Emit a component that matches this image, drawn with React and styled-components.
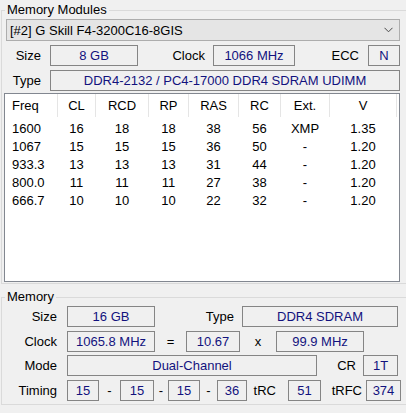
import React from "react";
import styled, { createGlobalStyle } from "styled-components";

const GlobalStyle = createGlobalStyle`
  html, body {
    margin: 0;
    padding: 0;
    background: #f0f0f0;
    width: 406px;
    height: 413px;
    overflow: hidden;
  }
  body {
    font-family: "Liberation Sans", Arial, sans-serif;
    font-size: 13px;
    color: #000;
  }
  * { box-sizing: border-box; }
`;

const Page = styled.div`
  width: 406px;
  height: 413px;
  display: flex;
  flex-direction: column;
`;

const Group = styled.fieldset`
  margin: ${(p) => p.$mt}px 0 0 1px;
  padding: 0 0 ${(p) => p.$pb}px 0;
  border: 1px solid #dadada;
  border-right: none;
  min-width: 0;
  display: flex;
  flex-direction: column;
`;

const Legend = styled.legend`
  margin-left: 3px;
  padding: 0 2px;
  line-height: 16px;
  height: 16px;
`;

const Row = styled.div`
  display: flex;
  align-items: center;
  height: ${(p) => p.$h || 21}px;
  margin-top: ${(p) => p.$mt}px;
`;

const Label = styled.span`
  flex: 0 0 ${(p) => p.$w}px;
  text-align: right;
  white-space: nowrap;
`;

const Sym = styled.span`
  flex: 0 0 ${(p) => p.$w}px;
  text-align: center;
`;

const Field = styled.div`
  flex: 0 0 ${(p) => p.$w}px;
  margin-left: ${(p) => p.$ml || 0}px;
  height: 21px;
  border: 1px solid #858585;
  color: #12127e;
  display: flex;
  align-items: center;
  justify-content: center;
  white-space: nowrap;
`;

const Select = styled.div`
  margin: 1px 0 0 4px;
  width: 394px;
  height: 22px;
  background: #e5e5e5;
  border: 1px solid #adadad;
  display: flex;
  align-items: center;
  justify-content: space-between;
  padding: 0 6px 0 3px;
`;

const Table = styled.div`
  margin: 2px 0 0 2px;
  width: 396px;
  height: 189px;
  border: 1px solid #828790;
  background: #fff;
  display: grid;
  grid-template-columns: 53px 38px 53px 40px 50px 42px 49px 67px;
  grid-template-rows: 24px repeat(5, 18px);
  row-gap: 0;
  align-content: start;
`;

const Head = styled.div`
  display: flex;
  align-items: center;
  justify-content: ${(p) => (p.$left ? "flex-start" : "center")};
  padding-left: ${(p) => (p.$left ? 7 : 0)}px;
  border-right: 1px solid #e5e5e5;
  margin-bottom: 1px;
`;

const Cell = styled.div`
  display: flex;
  align-items: center;
  justify-content: ${(p) => (p.$left ? "flex-start" : "center")};
  padding-left: ${(p) => (p.$left ? 7 : 0)}px;
  padding-right: 1px;
  transform: translateY(1px);
`;

const cols = ["Freq", "CL", "RCD", "RP", "RAS", "RC", "Ext.", "V"];
const rows = [
  ["1600", "16", "18", "18", "38", "56", "XMP", "1.35"],
  ["1067", "15", "15", "15", "36", "50", "-", "1.20"],
  ["933.3", "13", "13", "13", "31", "44", "-", "1.20"],
  ["800.0", "11", "11", "11", "27", "38", "-", "1.20"],
  ["666.7", "10", "10", "10", "22", "32", "-", "1.20"],
];

const Chevron = () => (
  <svg width="9" height="6" viewBox="0 0 9 6">
    <polyline points="0.5,0.8 4.5,4.8 8.5,0.8" fill="none" stroke="#4a4a4a" strokeWidth="1" />
  </svg>
);

export default function App() {
  return (
    <Page>
      <GlobalStyle />
      <Group $mt={2} $pb={1}>
        <Legend>Memory Modules</Legend>
        <Select>
          <span>[#2] G Skill F4-3200C16-8GIS</span>
          <Chevron />
        </Select>
        <Row $mt={4}>
          <Label $w={39}>Size</Label>
          <Field $ml={9} $w={88}>8 GB</Field>
          <Label $w={67}>Clock</Label>
          <Field $ml={8} $w={82}>1066 MHz</Field>
          <Label $w={64}>ECC</Label>
          <Field $ml={9} $w={32}>N</Field>
        </Row>
        <Row $mt={4}>
          <Label $w={39}>Type</Label>
          <Field $ml={9} $w={350}>DDR4-2132 / PC4-17000 DDR4 SDRAM UDIMM</Field>
        </Row>
        <Table>
          {cols.map((c, i) => (
            <Head key={c} $left={i === 0}>{c}</Head>
          ))}
          {rows.map((r, ri) =>
            r.map((v, ci) => (
              <Cell key={ri + "-" + ci} $left={ci === 0}>{v}</Cell>
            ))
          )}
        </Table>
      </Group>
      <Group $mt={5} $pb={3}>
        <Legend>Memory</Legend>
        <Row $mt={1}>
          <Label $w={55}>Size</Label>
          <Field $ml={10} $w={88}>16 GB</Field>
          <Label $w={79}>Type</Label>
          <Field $ml={8} $w={156}>DDR4 SDRAM</Field>
        </Row>
        <Row $mt={4}>
          <Label $w={55}>Clock</Label>
          <Field $ml={10} $w={88}>1065.8 MHz</Field>
          <Sym $w={31}>=</Sym>
          <Field $w={54}>10.67</Field>
          <Sym $w={36}>x</Sym>
          <Field $w={88}>99.9 MHz</Field>
        </Row>
        <Row $mt={3}>
          <Label $w={55}>Mode</Label>
          <Field $ml={10} $w={250}>Dual-Channel</Field>
          <Label $w={39}>CR</Label>
          <Field $ml={7} $w={35}>1T</Field>
        </Row>
        <Row $mt={4}>
          <Label $w={55}>Timing</Label>
          <Field $ml={10} $w={32}>15</Field>
          <Sym $w={21}>-</Sym>
          <Field $w={34}>15</Field>
          <Sym $w={14}>-</Sym>
          <Field $w={32}>15</Field>
          <Sym $w={17}>-</Sym>
          <Field $w={30}>36</Field>
          <Label $w={29}>tRC</Label>
          <Field $ml={12} $w={33}>51</Field>
          <Label $w={41}>tRFC</Label>
          <Field $ml={4} $w={35}>374</Field>
        </Row>
      </Group>
    </Page>
  );
}
